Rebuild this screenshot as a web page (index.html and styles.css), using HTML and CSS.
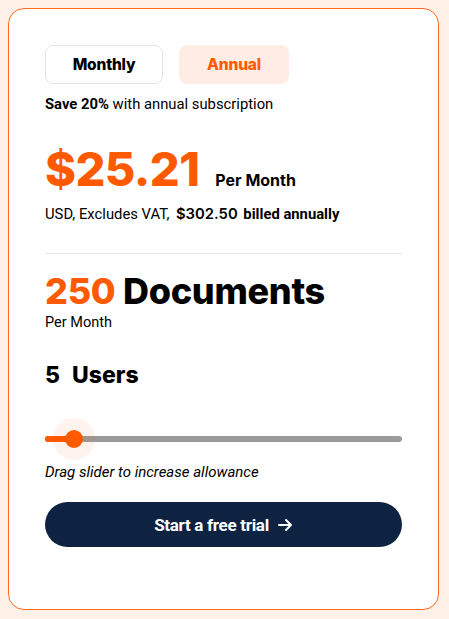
FILE: index.html
```html
<!DOCTYPE html>
<html lang="en">
<head>
<meta charset="utf-8">
<title>Pricing</title>
<link rel="stylesheet" href="styles.css">
</head>
<body>
<div class="card">
  <div class="toggle">
    <button class="tab tab-monthly">Monthly</button>
    <button class="tab tab-annual">Annual</button>
  </div>
  <p class="save"><strong>Save 20%</strong> with annual subscription</p>

  <div class="price-row">
    <span class="price">$25.21</span>
    <span class="per">Per Month</span>
  </div>
  <p class="billing">USD, Excludes VAT, <span class="total">$302.50</span> <strong>billed annually</strong></p>

  <hr class="divider">

  <div class="docs"><span class="accent">250</span> Documents</div>
  <p class="docs-sub">Per Month</p>

  <div class="users"><span>5</span><span>Users</span></div>

  <div class="slider">
    <div class="track"></div>
    <div class="fill" style="width: 29px"></div>
    <div class="halo" style="left: 29px"></div>
    <div class="thumb" style="left: 29px"></div>
  </div>
  <p class="hint">Drag slider to increase allowance</p>

  <button class="cta">Start a free trial
    <svg class="arrow" width="16" height="16" viewBox="0 0 16 16" fill="none" stroke="currentColor" stroke-width="2" stroke-linecap="round" stroke-linejoin="round"><path d="M2 8h12M9 3l5 5-5 5"/></svg>
  </button>
</div>
</body>
</html>
```

FILE: styles.css
```css
html, body {
  margin: 0;
  padding: 0;
}
body {
  background: #fff0e8;
  padding: 8px 10px 10px 8px;
  font-family: Roboto, "Liberation Sans", sans-serif;
  color: #000;
}
.card {
  width: 357px;
  background: #fff;
  border: 1px solid #ff6a1f;
  border-radius: 16px;
  padding: 36px 36px 0 36px;
  height: 564px;
}
.toggle {
  display: flex;
  gap: 16px;
}
.tab {
  height: 39px;
  border-radius: 8px;
  font-family: Inter, sans-serif;
  font-weight: 800;
  font-size: 15.5px;
  letter-spacing: -0.2px;
  cursor: pointer;
}
.tab-monthly {
  width: 118px;
  background: #fff;
  border: 1px solid #e3e5ea;
  color: #000;
}
.tab-annual {
  width: 110px;
  background: #ffede5;
  border: 1px solid #ffede5;
  color: #ff5a00;
}
.save {
  margin: 10px 0 0;
  font-size: 14.8px;
  line-height: 21px;
}
.save strong { font-weight: 700; }
.price-row {
  display: flex;
  align-items: baseline;
  gap: 16px;
  margin-top: 30px;
  height: 48px;
}
.price {
  font-family: Inter, sans-serif;
  font-weight: 800;
  font-size: 47px;
  line-height: 48px;
  color: #ff5a00;
  letter-spacing: -0.6px;
}
.per {
  font-family: Inter, sans-serif;
  font-weight: 700;
  font-size: 16px;
}
.billing {
  margin: 11px 0 0;
  font-size: 14.8px;
  line-height: 20px;
}
.total {
  font-family: Inter, sans-serif;
  font-weight: 600;
  font-size: 14.8px;
  margin: 0 2px 0 3px;
}
.billing strong { font-weight: 700; }
.divider {
  border: 0;
  border-top: 1px solid #e5e7eb;
  margin: 29px 0 0;
}
.docs {
  margin-top: 17px;
  font-family: Inter, sans-serif;
  font-weight: 800;
  font-size: 36px;
  line-height: 40px;
  letter-spacing: -0.3px;
}
.accent { color: #ff5a00; }
.docs-sub {
  margin: 2px 0 0;
  font-size: 14.5px;
  line-height: 20px;
}
.users {
  display: flex;
  gap: 12px;
  margin-top: 28px;
  font-family: Inter, sans-serif;
  font-weight: 800;
  font-size: 23px;
  line-height: 28px;
}
.slider {
  position: relative;
  height: 42px;
  margin-top: 29px;
}
.track {
  position: absolute;
  left: 0; right: 0;
  top: 18px;
  height: 6px;
  border-radius: 3px;
  background: #9a9a9a;
}
.fill {
  position: absolute;
  left: 0;
  top: 18px;
  height: 6px;
  border-radius: 3px;
  background: #ff5a00;
}
.halo {
  position: absolute;
  top: 0;
  width: 42px;
  height: 42px;
  margin-left: -21px;
  border-radius: 50%;
  background: rgba(255, 90, 0, 0.07);
}
.thumb {
  position: absolute;
  top: 12px;
  width: 18px;
  height: 18px;
  margin-left: -9px;
  border-radius: 50%;
  background: #ff5a00;
}
.hint {
  margin: 2px 0 0;
  font-size: 15px;
  font-style: italic;
  line-height: 20px;
}
.cta {
  display: flex;
  align-items: center;
  justify-content: center;
  gap: 8px;
  width: 100%;
  height: 45px;
  margin-top: 20px;
  border: 0;
  border-radius: 23px;
  background: #0d2341;
  color: #fff;
  font-family: Roboto, sans-serif;
  font-weight: 700;
  font-size: 17px;
  letter-spacing: -0.3px;
  cursor: pointer;
}
.arrow { display: block; }
```
